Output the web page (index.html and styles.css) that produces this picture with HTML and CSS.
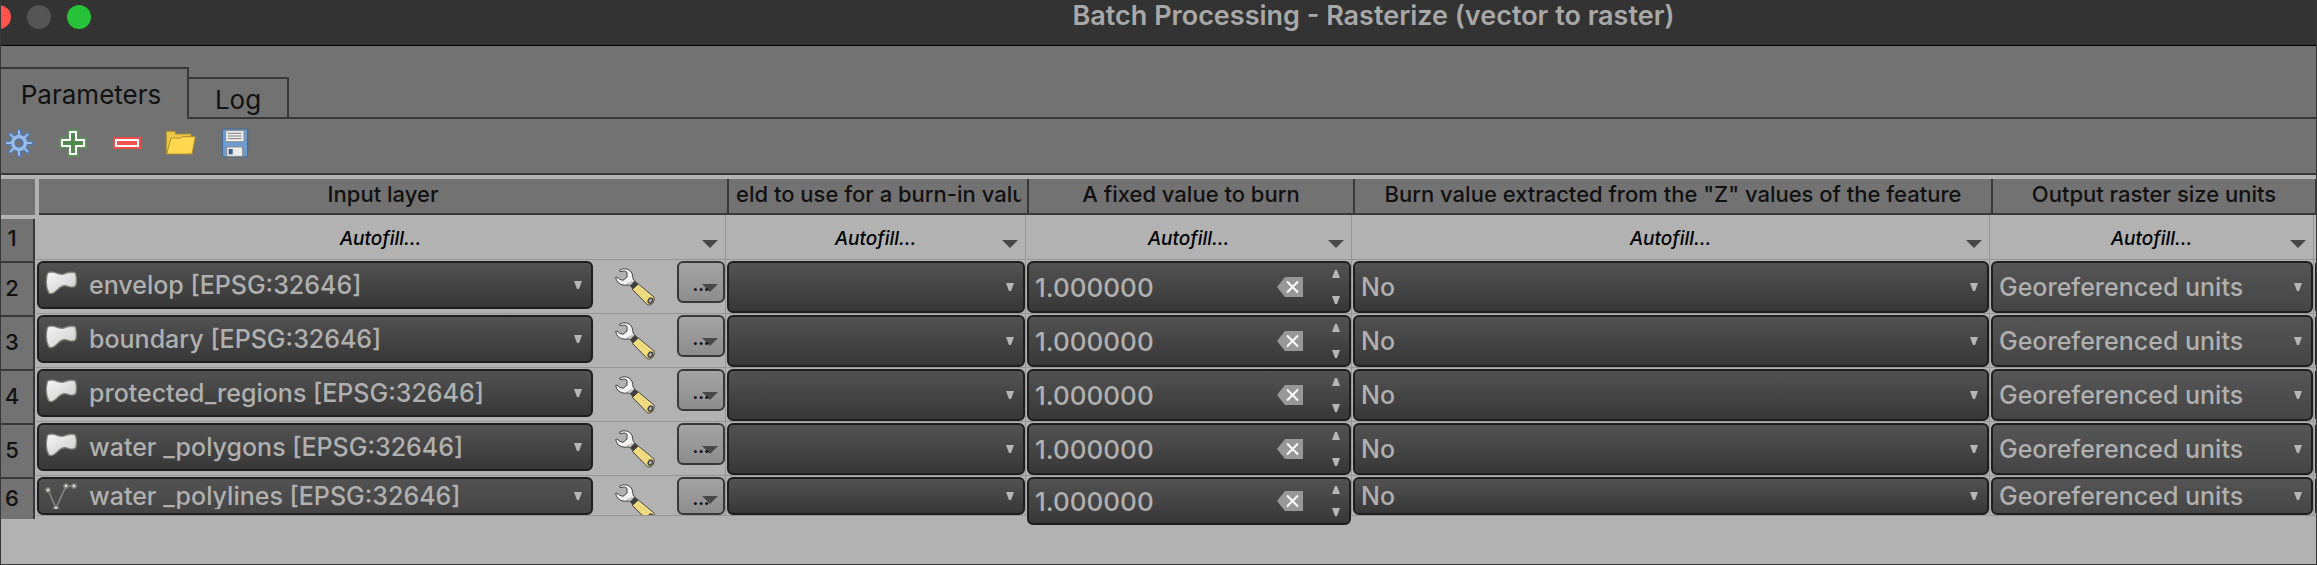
FILE: index.html
```html
<!DOCTYPE html>
<html lang="en">
<head>
<meta charset="utf-8">
<title>Batch Processing - Rasterize (vector to raster)</title>
<link rel="stylesheet" href="styles.css">
</head>
<body>
<svg class="defs" aria-hidden="true">
  <defs>
    <linearGradient id="g-poly" x1="0" y1="0" x2="1" y2="1"><stop offset="0" stop-color="#f6f6f6"/><stop offset="1" stop-color="#cbcbcb"/></linearGradient>
    <linearGradient id="g-handle" x1="0" y1="1" x2="1" y2="0"><stop offset="0" stop-color="#e6cf62"/><stop offset="1" stop-color="#fbe9a0"/></linearGradient>
  </defs>
  <symbol id="polygon" viewBox="0 0 96 72"><path d="M7 8Q12 1 28 4Q50 14 62 7Q80 1 91 6Q97 25 92 44Q82 52 66 45Q52 40 38 55Q22 72 12 66Q-1 45 7 8Z" fill="url(#g-poly)" stroke="#85857c" stroke-width="4"/></symbol>
  <symbol id="polyline" viewBox="0 0 96 78"><path d="M9 21L33 75L63 9H87" fill="none" stroke="#85857c" stroke-width="5"/><g fill="#e8e8e2" stroke="#85857c" stroke-width="5"><circle cx="9" cy="21" r="6"/><circle cx="33" cy="75" r="6"/><circle cx="63" cy="9" r="6"/><circle cx="87" cy="9" r="6"/></g></symbol>
  <symbol id="wrench" viewBox="0 0 120 114">
    <path d="M52 64L70 48L117 87Q120 97 113 106Q106 113 98 111Z" fill="url(#g-handle)" stroke="#454545" stroke-width="3"/>
    <path d="M63 54L109 94" stroke="#c9b45c" stroke-width="2" stroke-dasharray="4 3"/>
    <path d="M45 54L60 38L70 48L54 64Z" fill="#404040"/>
    <path d="M14 6Q24 0 35 3Q52 8 53 25Q53 34 59 39L46 53Q40 48 30 52Q5 50 2 28L6 27Q14 36 24 37L36 27V13L28 9L15 11Z" fill="#f2f2f2" stroke="#454545" stroke-width="3" stroke-linejoin="round"/>
    <path d="M34 46Q44 44 50 38L56 40L46 51Z" fill="#c4c4bd"/>
    <ellipse cx="106" cy="98" rx="6" ry="8" transform="rotate(30 106 98)" fill="#b2b2b2" stroke="#3c3c3c" stroke-width="4"/>
  </symbol>
  <symbol id="down" viewBox="0 0 8 8"><path d="M0 0H8L5 8H3Z" fill="#b6b6b6"/></symbol>
  <symbol id="up" viewBox="0 0 8 8"><path d="M0 8H8L5 0H3Z" fill="#b6b6b6"/></symbol>
  <symbol id="menu" viewBox="0 0 16 8"><path d="M0 0H16L8 8Z" fill="#484848"/></symbol>
  <symbol id="clear" viewBox="0 0 26 20"><path d="M0 10L8 0H26V20H8Z" fill="#979797"/><path d="M10 4.500L21 15.500M21 4.500L10 15.500" stroke="#fff" stroke-width="2"/></symbol>
</svg>

<main class="window">
  <header class="titlebar">
    <div class="lights"><button class="light red" aria-label="Close"></button><button class="light gray" aria-label="Minimize"></button><button class="light green" aria-label="Zoom"></button></div>
    <h1>Batch Processing - Rasterize (vector to raster)</h1>
  </header>

  <div class="tabs" role="tablist">
    <button class="tab active" role="tab" aria-selected="true">Parameters</button>
    <button class="tab" role="tab" aria-selected="false">Log</button>
  </div>

  <div class="toolbar" role="toolbar">
    <button aria-label="Advanced settings"><svg viewBox="0 0 28 28">
      <g stroke-linecap="round"><path d="M14 2V26M2 14H26M5.500 5.500L22.500 22.500M22.500 5.500L5.500 22.500" stroke="#467bc0" stroke-width="4.500"/><circle cx="14" cy="14" r="9" fill="#467bc0"/><path d="M14 2V26M2 14H26M5.500 5.500L22.500 22.500M22.500 5.500L5.500 22.500" stroke="#9dbce3" stroke-width="2"/></g>
      <circle cx="14" cy="14" r="6" fill="#737373" stroke="#9dbce3" stroke-width="4"/><circle cx="14" cy="14" r="4" fill="#727272" stroke="#467bc0" stroke-width="1.300"/></svg></button>
    <button aria-label="Add row"><svg viewBox="0 0 28 28"><path d="M8.500 0H19.500V8.500H28V19.500H19.500V28H8.500V19.500H0V8.500H8.500Z" fill="#5b9157"/><path d="M11 3H17V11H25V17H17V25H11V17H3V11H11Z" fill="#508a4c" stroke="#fff" stroke-width="2"/></svg></button>
    <button aria-label="Remove row"><svg viewBox="0 0 28 28"><path d="M0 8H28V20H0Z" fill="#ef4b4b"/><path d="M3 11H25V17H3Z" fill="#ee5353" stroke="#fff" stroke-width="2"/></svg></button>
    <button aria-label="Open"><svg viewBox="0 0 84 84"><path d="M-2 74V7H25V15H72V28L62 74Z" fill="#ecc84a" stroke="#a98e2d" stroke-width="3"/><path d="M-1 75L12 27H42L46 23H85L75 75Z" fill="#ffd850" stroke="#a98e2d" stroke-width="3" stroke-linejoin="round"/></svg></button>
    <button aria-label="Save"><svg viewBox="0 0 84 84"><rect x="4" y="0" width="76" height="84" rx="6" fill="#6d9bd0" stroke="#44688f" stroke-width="3"/><rect x="14" y="5" width="55" height="33" rx="3" fill="#f2f2f2" stroke="#8b8b8b" stroke-width="3"/><path d="M20 13H62M20 21H62M20 29H62" stroke="#777" stroke-width="3"/><rect x="17" y="54" width="48" height="28" rx="3" fill="#ececec" stroke="#8b8b8b" stroke-width="3"/><rect x="23" y="60" width="12" height="16" fill="#3d5c85"/></svg></button>
  </div>

  <div class="pane">
  <table>
    <colgroup><col class="c-num"><col class="c-layer"><col class="c-field"><col class="c-fixed"><col class="c-z"><col class="c-units"><col class="c-next"></colgroup>
    <thead>
      <tr><td class="corner"><div></div></td>
      <th scope="col"><div>Input layer</div></th>
      <th scope="col"><div class="cut"><span>eld to use for a burn-in valu</span></div></th>
      <th scope="col"><div>A fixed value to burn</div></th>
      <th scope="col"><div>Burn value extracted from the "Z" values of the feature</div></th>
      <th scope="col"><div>Output raster size units</div></th>
      <td></td></tr>
    </thead>
    <tbody>
      <tr class="fill"><th scope="row"><div>1</div></th>
        <td><button class="autofill">Autofill...<svg><use href="#menu"/></svg></button></td>
        <td><button class="autofill">Autofill...<svg><use href="#menu"/></svg></button></td>
        <td><button class="autofill">Autofill...<svg><use href="#menu"/></svg></button></td>
        <td><button class="autofill">Autofill...<svg><use href="#menu"/></svg></button></td>
        <td><button class="autofill">Autofill...<svg><use href="#menu"/></svg></button></td>
        <td></td></tr>
      <tr><th scope="row"><div>2</div></th>
        <td><div class="layer"><div class="combo"><svg class="kind"><use href="#polygon"/></svg><select aria-label="Input layer 2"><option>envelop [EPSG:32646]</option></select><svg class="arrow"><use href="#down"/></svg></div><button class="tool" aria-label="Advanced options"><svg><use href="#wrench"/></svg></button><button class="more">...<svg><use href="#menu"/></svg></button></div></td>
        <td><div class="combo"><select aria-label="Burn-in field 2"><option></option></select><svg class="arrow"><use href="#down"/></svg></div></td>
        <td><div class="combo spin"><input type="text" aria-label="Fixed value 2" value="1.000000"><button class="clear" aria-label="Clear"><svg><use href="#clear"/></svg></button><span class="steps"><button aria-label="Increase"><svg><use href="#up"/></svg></button><button aria-label="Decrease"><svg><use href="#down"/></svg></button></span></div></td>
        <td><div class="combo"><select aria-label="Z value 2"><option>No</option></select><svg class="arrow"><use href="#down"/></svg></div></td>
        <td><div class="combo units"><select aria-label="Units 2"><option>Georeferenced units</option></select><svg class="arrow"><use href="#down"/></svg></div></td>
        <td><div class="combo"></div></td></tr>
      <tr><th scope="row"><div>3</div></th>
        <td><div class="layer"><div class="combo"><svg class="kind"><use href="#polygon"/></svg><select aria-label="Input layer 3"><option>boundary [EPSG:32646]</option></select><svg class="arrow"><use href="#down"/></svg></div><button class="tool" aria-label="Advanced options"><svg><use href="#wrench"/></svg></button><button class="more">...<svg><use href="#menu"/></svg></button></div></td>
        <td><div class="combo"><select aria-label="Burn-in field 3"><option></option></select><svg class="arrow"><use href="#down"/></svg></div></td>
        <td><div class="combo spin"><input type="text" aria-label="Fixed value 3" value="1.000000"><button class="clear" aria-label="Clear"><svg><use href="#clear"/></svg></button><span class="steps"><button aria-label="Increase"><svg><use href="#up"/></svg></button><button aria-label="Decrease"><svg><use href="#down"/></svg></button></span></div></td>
        <td><div class="combo"><select aria-label="Z value 3"><option>No</option></select><svg class="arrow"><use href="#down"/></svg></div></td>
        <td><div class="combo units"><select aria-label="Units 3"><option>Georeferenced units</option></select><svg class="arrow"><use href="#down"/></svg></div></td>
        <td><div class="combo"></div></td></tr>
      <tr><th scope="row"><div>4</div></th>
        <td><div class="layer"><div class="combo"><svg class="kind"><use href="#polygon"/></svg><select aria-label="Input layer 4"><option>protected_regions [EPSG:32646]</option></select><svg class="arrow"><use href="#down"/></svg></div><button class="tool" aria-label="Advanced options"><svg><use href="#wrench"/></svg></button><button class="more">...<svg><use href="#menu"/></svg></button></div></td>
        <td><div class="combo"><select aria-label="Burn-in field 4"><option></option></select><svg class="arrow"><use href="#down"/></svg></div></td>
        <td><div class="combo spin"><input type="text" aria-label="Fixed value 4" value="1.000000"><button class="clear" aria-label="Clear"><svg><use href="#clear"/></svg></button><span class="steps"><button aria-label="Increase"><svg><use href="#up"/></svg></button><button aria-label="Decrease"><svg><use href="#down"/></svg></button></span></div></td>
        <td><div class="combo"><select aria-label="Z value 4"><option>No</option></select><svg class="arrow"><use href="#down"/></svg></div></td>
        <td><div class="combo units"><select aria-label="Units 4"><option>Georeferenced units</option></select><svg class="arrow"><use href="#down"/></svg></div></td>
        <td><div class="combo"></div></td></tr>
      <tr><th scope="row"><div>5</div></th>
        <td><div class="layer"><div class="combo"><svg class="kind"><use href="#polygon"/></svg><select aria-label="Input layer 5"><option>water _polygons [EPSG:32646]</option></select><svg class="arrow"><use href="#down"/></svg></div><button class="tool" aria-label="Advanced options"><svg><use href="#wrench"/></svg></button><button class="more">...<svg><use href="#menu"/></svg></button></div></td>
        <td><div class="combo"><select aria-label="Burn-in field 5"><option></option></select><svg class="arrow"><use href="#down"/></svg></div></td>
        <td><div class="combo spin"><input type="text" aria-label="Fixed value 5" value="1.000000"><button class="clear" aria-label="Clear"><svg><use href="#clear"/></svg></button><span class="steps"><button aria-label="Increase"><svg><use href="#up"/></svg></button><button aria-label="Decrease"><svg><use href="#down"/></svg></button></span></div></td>
        <td><div class="combo"><select aria-label="Z value 5"><option>No</option></select><svg class="arrow"><use href="#down"/></svg></div></td>
        <td><div class="combo units"><select aria-label="Units 5"><option>Georeferenced units</option></select><svg class="arrow"><use href="#down"/></svg></div></td>
        <td><div class="combo"></div></td></tr>
      <tr class="short"><th scope="row"><div>6</div></th>
        <td><div class="layer"><div class="combo"><svg class="kind line"><use href="#polyline"/></svg><select aria-label="Input layer 6"><option>water _polylines [EPSG:32646]</option></select><svg class="arrow"><use href="#down"/></svg></div><button class="tool" aria-label="Advanced options"><svg><use href="#wrench"/></svg></button><button class="more">...<svg><use href="#menu"/></svg></button></div></td>
        <td><div class="combo"><select aria-label="Burn-in field 6"><option></option></select><svg class="arrow"><use href="#down"/></svg></div></td>
        <td><div class="combo spin"><input type="text" aria-label="Fixed value 6" value="1.000000"><button class="clear" aria-label="Clear"><svg><use href="#clear"/></svg></button><span class="steps"><button aria-label="Increase"><svg><use href="#up"/></svg></button><button aria-label="Decrease"><svg><use href="#down"/></svg></button></span></div></td>
        <td><div class="combo"><select aria-label="Z value 6"><option>No</option></select><svg class="arrow"><use href="#down"/></svg></div></td>
        <td><div class="combo units"><select aria-label="Units 6"><option>Georeferenced units</option></select><svg class="arrow"><use href="#down"/></svg></div></td>
        <td><div class="combo"></div></td></tr>
    </tbody>
  </table>
  </div>
</main>
</body>
</html>
```
FILE: styles.css
```css
:root {
  --panel: #727272;
  --light: #b2b2b2;
  --edge: #383838;
  --grid: #969696;
}
* { box-sizing: border-box; }
body { margin: 0; font-family: Inter, "Liberation Sans", sans-serif; font-size: 26px; }
button, select, input { font: inherit; color: inherit; margin: 0; padding: 0; border: 0; background: none; }
svg { display: block; overflow: visible; }
.defs { position: absolute; width: 0; height: 0; }

.window {
  display: flex;
  flex-direction: column;
  min-height: 100vh;
  overflow: hidden;
  background: var(--panel);
  border: 1px solid var(--edge);
  border-top: 0;
}
.titlebar { display: flex; height: 46px; background: #333; border-bottom: 1px solid #000; }
.lights { display: flex; gap: 16px; margin-left: -14px; padding-top: 5px; }
.light { width: 24px; height: 24px; border-radius: 50%; }
.red { background: #ff544d; }
.gray { background: #555; }
.green { background: #26c238; }
h1 { flex: 1; margin: 0; padding-left: 340px; text-align: center; font-size: 27px; line-height: 32px; font-weight: 600; color: #a8a8a8; }

.tabs { display: flex; align-items: flex-end; height: 73px; color: #111; }
.tabs::after { content: ""; flex: 1; border-bottom: 2px solid var(--edge); }
.tab { width: 100px; height: 42px; padding-top: 2px; border: solid var(--edge); border-width: 2px 2px 2px 0; }
.tab.active { width: 188px; height: 52px; border-bottom: 0; padding: 0 6px 0 0; }

.toolbar { display: flex; gap: 26px; padding: 10px 4px 16px; }
.toolbar button, .toolbar svg { width: 28px; height: 28px; }

.pane { flex: 1; padding-top: 4px; background: var(--light); border-top: 2px solid var(--edge); }
table { width: 100%; table-layout: fixed; border-collapse: separate; border-spacing: 0; }
.c-num { width: 35px; }
.c-layer { width: 690px; }
.c-field { width: 300px; }
.c-fixed { width: 326px; }
.c-z { width: 638px; }
.c-units { width: 324px; }
.c-next { width: 2px; }
th, td { padding: 0; vertical-align: top; font-size: 22px; font-weight: 500; color: #111; }

thead div { height: 36px; margin: 0 -3px 0 3px; background: var(--panel); border: solid var(--edge); border-width: 0 2px 2px 0; line-height: 31px; white-space: nowrap; }
thead .corner div { margin: 0 1px 0 0; border: 0; }
.cut { padding: 0 6px 0 7px; }
.cut span { display: block; overflow: hidden; text-align: left; }

tbody th div { height: 54px; margin: 3px 1px -3px 0; padding-right: 10px; background: var(--panel); border: solid var(--edge); border-width: 0 2px 2px 0; line-height: 50px; }
.fill th div { height: 44px; margin-top: 4px; line-height: 38px; }
.short th div { height: 40px; line-height: 38px; border-bottom: 0; }

tbody td { height: 54px; padding: 1px 0 0 1px; border: solid var(--grid); border-width: 0 1px 1px 0; }
tbody td:last-child { border-right: 0; }
.fill td { height: 45px; padding: 0; }
.short td { height: 40px; }

.autofill { position: relative; display: block; width: 100%; height: 44px; padding-top: 2px; font-size: 19px; font-style: italic; color: #000; }
.autofill svg { position: absolute; right: 7px; bottom: 11px; width: 16px; height: 8px; }

.combo { display: flex; align-items: center; height: 52px; padding: 0 11px 0 6px; color: #b0b0b0; font-size: 25px; font-weight: 500; background: linear-gradient(#525252, #373737); border: 2px solid #1e1e1e; border-radius: 6px; }
.combo.units { background: linear-gradient(#555, #454545); }
.combo.spin { font-size: 26px; }
.combo select, .combo input { flex: 1; min-width: 0; width: 0; height: 36px; appearance: none; outline: 0; }
.arrow { width: 8px; height: 8px; margin-right: -2px; flex: none; }
.combo:empty { padding: 0; width: 8px; }
.short .combo { height: 38px; }
.short .combo select { height: 30px; line-height: 30px; }
.short .spin { height: 48px; margin-bottom: -10px; position: relative; }

.layer { display: flex; align-items: flex-start; }
.layer .combo { flex: 1; height: 48px; }
.short .layer { height: 38px; overflow: hidden; }
.short .layer .combo { height: 38px; background: linear-gradient(#525252, #444); }
.short .layer .combo select { height: 26px; line-height: 26px; }
.kind { width: 32px; height: 24px; margin: 0 12px 4px 0; flex: none; }
.kind.line { height: 26px; margin-bottom: 0; overflow: hidden; }
.tool { width: 84px; height: 52px; display: grid; place-items: center; }
.tool svg { width: 40px; height: 38px; }
.more { position: relative; isolation: isolate; width: 48px; height: 42px; padding-top: 4px; border: 2px solid var(--edge); border-radius: 6px; background: linear-gradient(#a4a4a4, #8d8d8d); font-size: 18px; font-weight: 600; color: #000; }
.more svg { position: absolute; z-index: -1; right: 5px; bottom: 9px; width: 16px; height: 8px; }
.short .more { height: 38px; }

.clear svg { width: 26px; height: 20px; }
.steps { display: flex; flex-direction: column; justify-content: space-between; align-self: stretch; padding: 7px 0; margin: 0 -2px 0 29px; }
.steps button, .steps svg { width: 8px; height: 8px; }
```
